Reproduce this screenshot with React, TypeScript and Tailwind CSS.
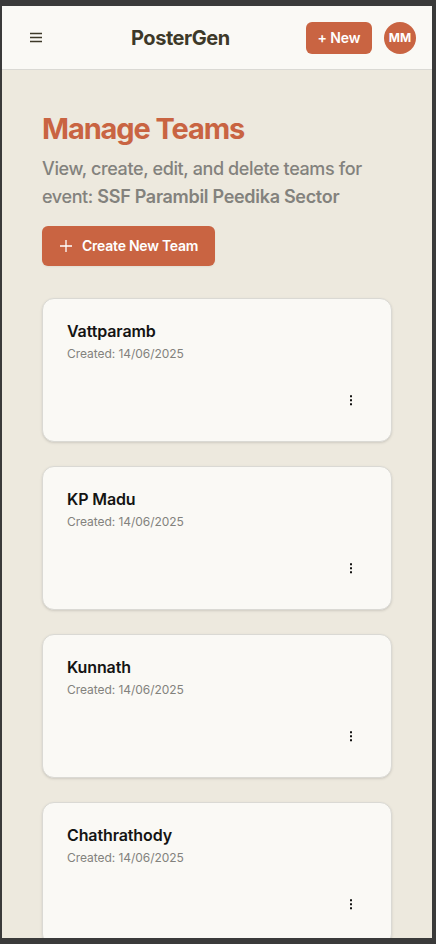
const teams = [
  { name: 'Vattparamb', created: '14/06/2025' },
  { name: 'KP Madu', created: '14/06/2025' },
  { name: 'Kunnath', created: '14/06/2025' },
  { name: 'Chathrathody', created: '14/06/2025' },
]

function MenuIcon() {
  return (
    <svg width="12" height="11" viewBox="0 0 12 11" stroke="#3d3929" strokeWidth="1.4">
      <path d="M0 1.5h12M0 5.5h12M0 9.5h12" />
    </svg>
  )
}

function DotsIcon() {
  return (
    <svg width="2" height="11" viewBox="0 0 2 11" fill="#141413">
      <path d="M0 0.2h2v2h-2zM0 4.2h2v2h-2zM0 8.2h2v2h-2z" />
    </svg>
  )
}

function Header() {
  return (
    <header className="flex h-16 shrink-0 items-center border-b border-[#dad9d4] bg-[#faf9f5] pr-4 pl-[18px]">
      <button className="flex size-8 items-center justify-center" aria-label="Menu">
        <MenuIcon />
      </button>
      <span className="ml-[79px] text-xl font-bold tracking-[-0.45px] text-[#3d3929]">PosterGen</span>
      <div className="ml-auto flex items-center gap-3">
        <button className="h-8 w-[66px] rounded-md bg-[#c96442] text-sm font-semibold tracking-[-0.1px] text-white">
          + New
        </button>
        <span className="flex size-8 items-center justify-center rounded-full bg-[#c96442] text-xs font-bold text-white">
          MM
        </span>
      </div>
    </header>
  )
}

export default function App() {
  return (
    <div className="h-[944px] w-[436px] overflow-hidden bg-[#3a3a3a] pt-1.5 pr-1 pb-1.5 pl-0.5 font-['Inter',sans-serif]">
      <div className="flex h-full flex-col overflow-hidden bg-[#ede9de]">
        <Header />

        <main className="px-10 pt-[41px]">
          <h1 className="text-[29px] leading-9 font-bold tracking-[-1.1px] text-[#c96442]">Manage Teams</h1>
          <p className="mt-2 text-lg leading-7 font-medium tracking-[-0.38px] whitespace-nowrap text-[#83827d]">
            View, create, edit, and delete teams for
            <br />
            event: <span className="font-semibold tracking-[-0.3px]">SSF Parambil Peedika Sector</span>
          </p>
          <button className="mt-[15px] flex h-10 w-[172.5px] items-center rounded-md bg-[#c96442] pl-[18px] text-sm font-semibold tracking-[-0.24px] whitespace-nowrap text-white shadow-xs">
            <svg className="mr-2.5" width="12" height="12" viewBox="0 0 12 12" stroke="currentColor" strokeWidth="1.3">
              <path d="M6 0v12M0 6h12" />
            </svg>
            Create New Team
          </button>

          {/* Team list */}
          <div className="mt-8 flex flex-col gap-6">
            {teams.map((team) => (
              <div
                key={team.name}
                className="flex h-36 flex-col rounded-xl border border-[#dad9d4] bg-[#faf9f5] px-6 pt-6 shadow-sm"
              >
                <h3 className="text-base leading-4 font-semibold tracking-[-0.12px] text-[#141413]">{team.name}</h3>
                <p className="mt-[7px] text-xs leading-4 tracking-[-0.05px] text-[#83827d]">Created: {team.created}</p>
                <button className="mt-[22px] ml-auto flex size-8 items-center justify-center" aria-label="Team options">
                  <DotsIcon />
                </button>
              </div>
            ))}
          </div>
        </main>
      </div>
    </div>
  )
}
